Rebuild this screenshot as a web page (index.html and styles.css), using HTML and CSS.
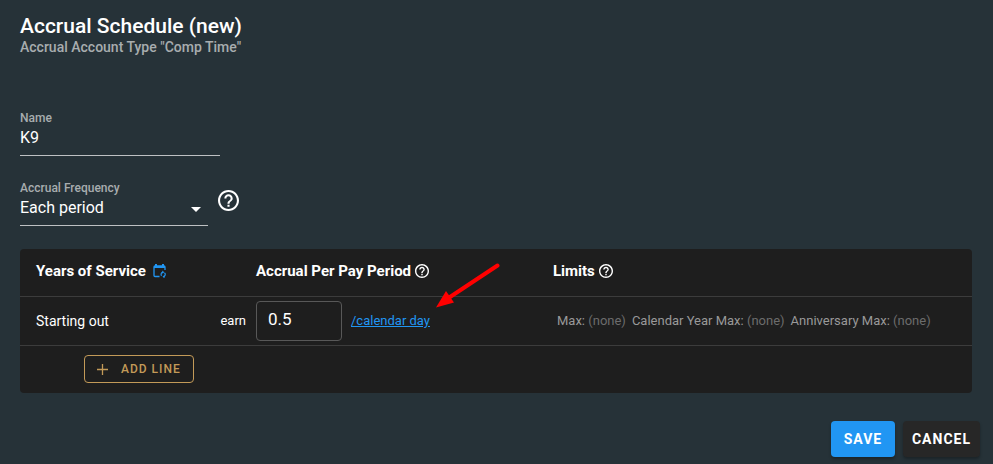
FILE: index.html
```html
<!DOCTYPE html>
<html lang="en">
<head>
<meta charset="utf-8">
<title>Accrual Schedule</title>
<link rel="stylesheet" href="styles.css">
</head>
<body>
<form class="page">
    <h1 class="title">Accrual Schedule (new)</h1>
    <p class="subtitle">Accrual Account Type "Comp Time"</p>

    <div class="field name-field">
        <label for="name">Name</label>
        <input type="text" id="name" value="K9">
    </div>

    <div class="frequency">
        <div class="field select-field">
            <label for="frequency">Accrual Frequency</label>
            <select id="frequency">
                <option selected>Each period</option>
            </select>
            <svg class="caret" viewBox="0 0 10 5"><path d="M0 0h10L5 5z"/></svg>
        </div>
        <svg class="help help-large" viewBox="2 2 20 20"><path d="M11 18h2v-2h-2v2zM12 2C6.480 2 2 6.480 2 12s4.480 10 10 10 10-4.480 10-10S17.520 2 12 2zm0 18c-4.410 0-8-3.590-8-8s3.590-8 8-8 8 3.590 8 8-3.590 8-8 8zm0-14c-2.210 0-4 1.790-4 4h2c0-1.100.9-2 2-2s2 .9 2 2c0 2-3 1.750-3 5h2c0-2.250 3-2.500 3-5 0-2.210-1.790-4-4-4z"/></svg>
    </div>

    <div class="card">
        <table>
            <thead>
                <tr>
                    <th class="years">
                        <div class="head">
                            Years of Service
                            <svg class="calendar" viewBox="0 0 14 14" fill="none" stroke="currentColor">
                                <path d="M6.500 12.500H2q-1 0-1-1V3q0-1 1-1h9q1 0 1 1v3" stroke-width="1.300"/>
                                <path d="M1 3h11M3 0v3M10 0v3" stroke-width="2"/>
                                <path d="M8.500 11.800A2.300 2.300 0 0 1 10 8.200M11.500 8.800a2.300 2.300 0 0 1-.8 3.900" stroke-width="1.200"/>
                                <path d="M9.300 6.500v3.300l2-1.600zM11.500 11v3.300l-2-1.600z" fill="currentColor" stroke="none"/>
                            </svg>
                        </div>
                    </th>
                    <th class="accrual">
                        <div class="head">
                            Accrual Per Pay Period
                            <svg class="help" viewBox="2 2 20 20"><path d="M11 18h2v-2h-2v2zM12 2C6.480 2 2 6.480 2 12s4.480 10 10 10 10-4.480 10-10S17.520 2 12 2zm0 18c-4.410 0-8-3.590-8-8s3.590-8 8-8 8 3.590 8 8-3.590 8-8 8zm0-14c-2.210 0-4 1.790-4 4h2c0-1.100.9-2 2-2s2 .9 2 2c0 2-3 1.750-3 5h2c0-2.250 3-2.500 3-5 0-2.210-1.790-4-4-4z"/></svg>
                        </div>
                    </th>
                    <th>
                        <div class="head">
                            Limits
                            <svg class="help" viewBox="2 2 20 20"><path d="M11 18h2v-2h-2v2zM12 2C6.480 2 2 6.480 2 12s4.480 10 10 10 10-4.480 10-10S17.520 2 12 2zm0 18c-4.410 0-8-3.590-8-8s3.590-8 8-8 8 3.590 8 8-3.590 8-8 8zm0-14c-2.210 0-4 1.790-4 4h2c0-1.100.9-2 2-2s2 .9 2 2c0 2-3 1.750-3 5h2c0-2.250 3-2.500 3-5 0-2.210-1.790-4-4-4z"/></svg>
                        </div>
                    </th>
                </tr>
            </thead>
            <tbody>
                <tr>
                    <td class="years">
                        <div class="start">
                            <span>Starting out</span>
                            <label class="earn" for="amount">earn</label>
                        </div>
                    </td>
                    <td class="accrual">
                        <div class="rate">
                            <input type="text" id="amount" value="0.5">
                            <a href="#">/calendar day</a>
                            <svg class="pointer" viewBox="0 0 64 46">
                                <path d="M61.500 2.500L14 34" stroke="#f00" stroke-width="4" stroke-linecap="round"/>
                                <path d="M0 44.500L10 28l8 11.500z" fill="#f00"/>
                            </svg>
                        </div>
                    </td>
                    <td>
                        <div class="limits">
                            <span>Max: <i>(none)</i></span>
                            <span>Calendar Year Max: <i>(none)</i></span>
                            <span>Anniversary Max: <i>(none)</i></span>
                        </div>
                    </td>
                </tr>
                <tr>
                    <td colspan="3">
                        <button type="button" class="add">
                            <svg class="plus" viewBox="0 0 11 11"><path d="M5.500 0v11M0 5.500h11" stroke="currentColor" stroke-width="1.300"/></svg>
                            ADD LINE
                        </button>
                    </td>
                </tr>
            </tbody>
        </table>
    </div>

    <div class="actions">
        <button type="submit" class="btn save">SAVE</button>
        <button type="button" class="btn cancel">CANCEL</button>
    </div>
</form>
</body>
</html>
```
FILE: styles.css
```css
* {
    box-sizing: border-box;
}

body {
    margin: 0;
    background-color: #263238;
    color: #fff;
    font-family: Roboto, "Liberation Sans", sans-serif;
    font-size: 14px;
}

input, select, button {
    font-family: inherit;
    color: inherit;
}

.page {
    padding: 14px 13px 7px 20px;
}

.title {
    margin: 0;
    font-size: 21px;
    line-height: 24px;
    font-weight: 500;
}

.subtitle {
    margin: 0;
    font-size: 14px;
    line-height: 18px;
    font-weight: 500;
    color: #a8adaf;
}

.field {
    position: relative;
    display: flex;
    flex-direction: column;
}

.field label {
    font-size: 12px;
    line-height: 16px;
    font-weight: 500;
    color: #a8adaf;
}

.field input, .field select {
    height: 30px;
    padding: 0 0 6px;
    border: 0;
    border-bottom: 1px solid #bec1c3;
    border-radius: 0;
    background: transparent;
    font-size: 16px;
    appearance: none;
    outline: none;
}

.name-field {
    width: 200px;
    margin-top: 54px;
}

.frequency {
    display: flex;
    align-items: center;
    gap: 10px;
    margin-top: 24px;
}

.select-field {
    width: 188px;
}

.caret {
    position: absolute;
    right: 7px;
    bottom: 14px;
    width: 10px;
    height: 5px;
    fill: #fff;
    pointer-events: none;
}

.help {
    width: 14px;
    height: 14px;
    fill: #fff;
}

.help-large {
    width: 21px;
    height: 21px;
    margin-bottom: 5px;
}

.card {
    margin: 23px 8px 0 0;
    border-radius: 4px;
    background-color: #1e1e1e;
}

table {
    width: 100%;
    border-collapse: collapse;
    table-layout: fixed;
}

th, td {
    height: 48px;
    padding: 0;
    text-align: left;
}

th {
    height: 47px;
    font-size: 15px;
    font-weight: 700;
}

td {
    border-top: 1px solid #3c3c3c;
}

.years {
    width: 236px;
    padding-left: 16px;
}

.accrual {
    width: 297px;
}

td.accrual {
    height: 49px;
}

.head {
    display: flex;
    align-items: center;
    gap: 4px;
    margin-bottom: 2px;
}

.calendar {
    width: 14px;
    height: 14px;
    margin-left: 3px;
    color: #2196f3;
}

.start {
    display: flex;
    align-items: center;
    justify-content: space-between;
    padding-right: 10px;
}

.earn {
    font-size: 13px;
}

.rate {
    position: relative;
    display: flex;
    align-items: center;
    gap: 9px;
}

.rate input {
    width: 86px;
    height: 40px;
    padding: 0 11px 3px;
    border: 1px solid #585858;
    border-radius: 4px;
    background: transparent;
    font-size: 17px;
    outline: none;
}

.rate a {
    font-size: 13px;
    color: #2196f3;
}

.pointer {
    position: absolute;
    left: 180px;
    top: -38px;
    width: 64px;
    height: 46px;
}

.limits {
    display: flex;
    gap: 6px;
    padding-left: 4px;
    font-size: 13px;
    white-space: nowrap;
    color: #999;
}

.limits i {
    font-style: normal;
    color: #6c6c6c;
}

.add {
    display: flex;
    align-items: center;
    gap: 13px;
    height: 28px;
    margin-left: 64px;
    padding: 0 12px;
    border: 1px solid #c39a58;
    border-radius: 4px;
    background: transparent;
    color: #c39a58;
    font-size: 12px;
    font-weight: 500;
    letter-spacing: 1px;
}

.plus {
    width: 11px;
    height: 11px;
}

.actions {
    display: flex;
    justify-content: flex-end;
    gap: 8px;
    margin-top: 28px;
}

.btn {
    height: 36px;
    padding: 0 9px;
    border: 0;
    border-radius: 4px;
    font-size: 14px;
    font-weight: 700;
    letter-spacing: 1px;
    box-shadow: 0 2px 3px rgba(0, 0, 0, 0.3);
}

.save {
    min-width: 64px;
    background-color: #2196f3;
}

.cancel {
    background-color: #272727;
}
```
